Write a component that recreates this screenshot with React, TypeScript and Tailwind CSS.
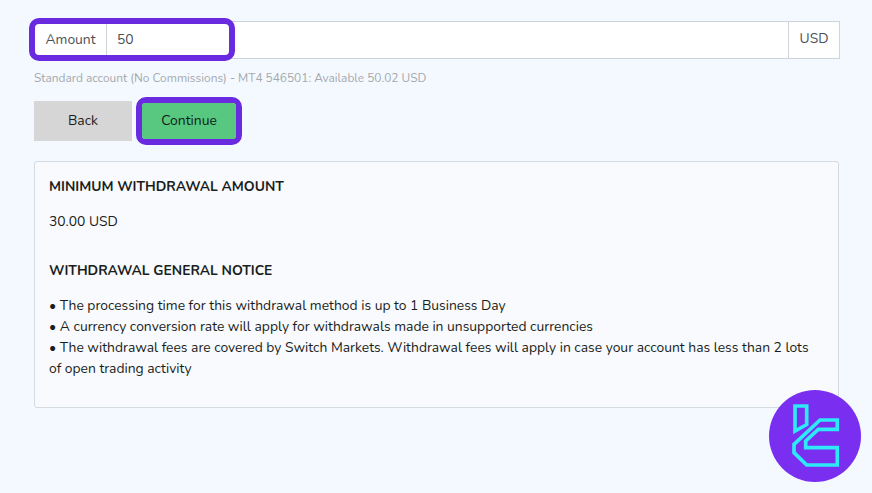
const font = "font-['Nunito','Lato','Noto_Sans',sans-serif]";

function Logo() {
  return (
    <svg viewBox="0 0 92 92" className="h-[92px] w-[92px]">
      <circle cx="46" cy="46" r="46" fill="#7a2ff0" />
      <g fill="none" stroke="#2ee9f8" strokeWidth="3.7" strokeLinejoin="miter">
        <path d="M26 16 H37.7 V34.5 L26 41 Z" />
        <path d="M51 30 H68.3 V39.3 H49.3 L36.7 51 V57.7 H68.3 V75 H37.7 L25 62.7 V54.3 Z" />
      </g>
    </svg>
  );
}

export default function App() {
  return (
    <div className={`relative h-[493px] w-[872px] overflow-hidden bg-[#f4f9ff] px-[34px] pt-[21px] text-[#1a1d20] ${font}`}>
      <div className="relative flex h-[38px] w-[806px] border border-[#ced4da] bg-white text-[13.85px]">
        <div className="flex w-[72px] items-center justify-center border-r border-[#ced4da] text-[#495057]">Amount</div>
        <div className="flex flex-1 items-center pl-[10px] text-[#495057]">50</div>
        <div className="flex w-[51px] items-center justify-center border-l border-[#ced4da] pb-[2px] text-[#495057]">USD</div>
        <div className="absolute left-[-6px] top-[-4px] h-[43px] w-[206px] rounded-[10px] border-[6px] border-[#6a2ae0]" />
      </div>
      <p className="mt-[11px] text-[11.9px] leading-[16px] text-[#a5a9ad]">
        Standard account (No Commissions) - MT4 546501: Available 50.02 USD
      </p>
      <div className="mt-[11px] flex items-center gap-[4px]">
        <button className="h-10 w-[98px] bg-[#d6d6d6] text-[13.85px] text-[#1a1d20]">Back</button>
        <div className="rounded-[10px] border-[6px] border-[#6a2ae0]">
          <button className="block h-[36px] w-[94px] rounded-[3px] bg-[#58c880] text-[13.85px] text-[#10201a]">Continue</button>
        </div>
      </div>
      <div className="mt-[16px] h-[247px] w-[805px] rounded-[3px] border border-[#d3dae0] bg-[#f8fafd] px-[14px] pt-[14px] text-[13.85px] leading-[21px]">
        <h4 className="font-bold">MINIMUM WITHDRAWAL AMOUNT</h4>
        <p className="mt-[14px]">30.00 USD</p>
        <h4 className="mt-[28px] font-bold">WITHDRAWAL GENERAL NOTICE</h4>
        <p className="mt-[14px]">
          • The processing time for this withdrawal method is up to 1 Business Day
          <br />
          • A currency conversion rate will apply for withdrawals made in unsupported currencies
          <br />
          • The withdrawal fees are covered by Switch Markets. Withdrawal fees will apply in case your account has less than 2 lots of open trading activity
        </p>
      </div>
      <div className="absolute left-[769px] top-[390px]">
        <Logo />
      </div>
    </div>
  );
}
